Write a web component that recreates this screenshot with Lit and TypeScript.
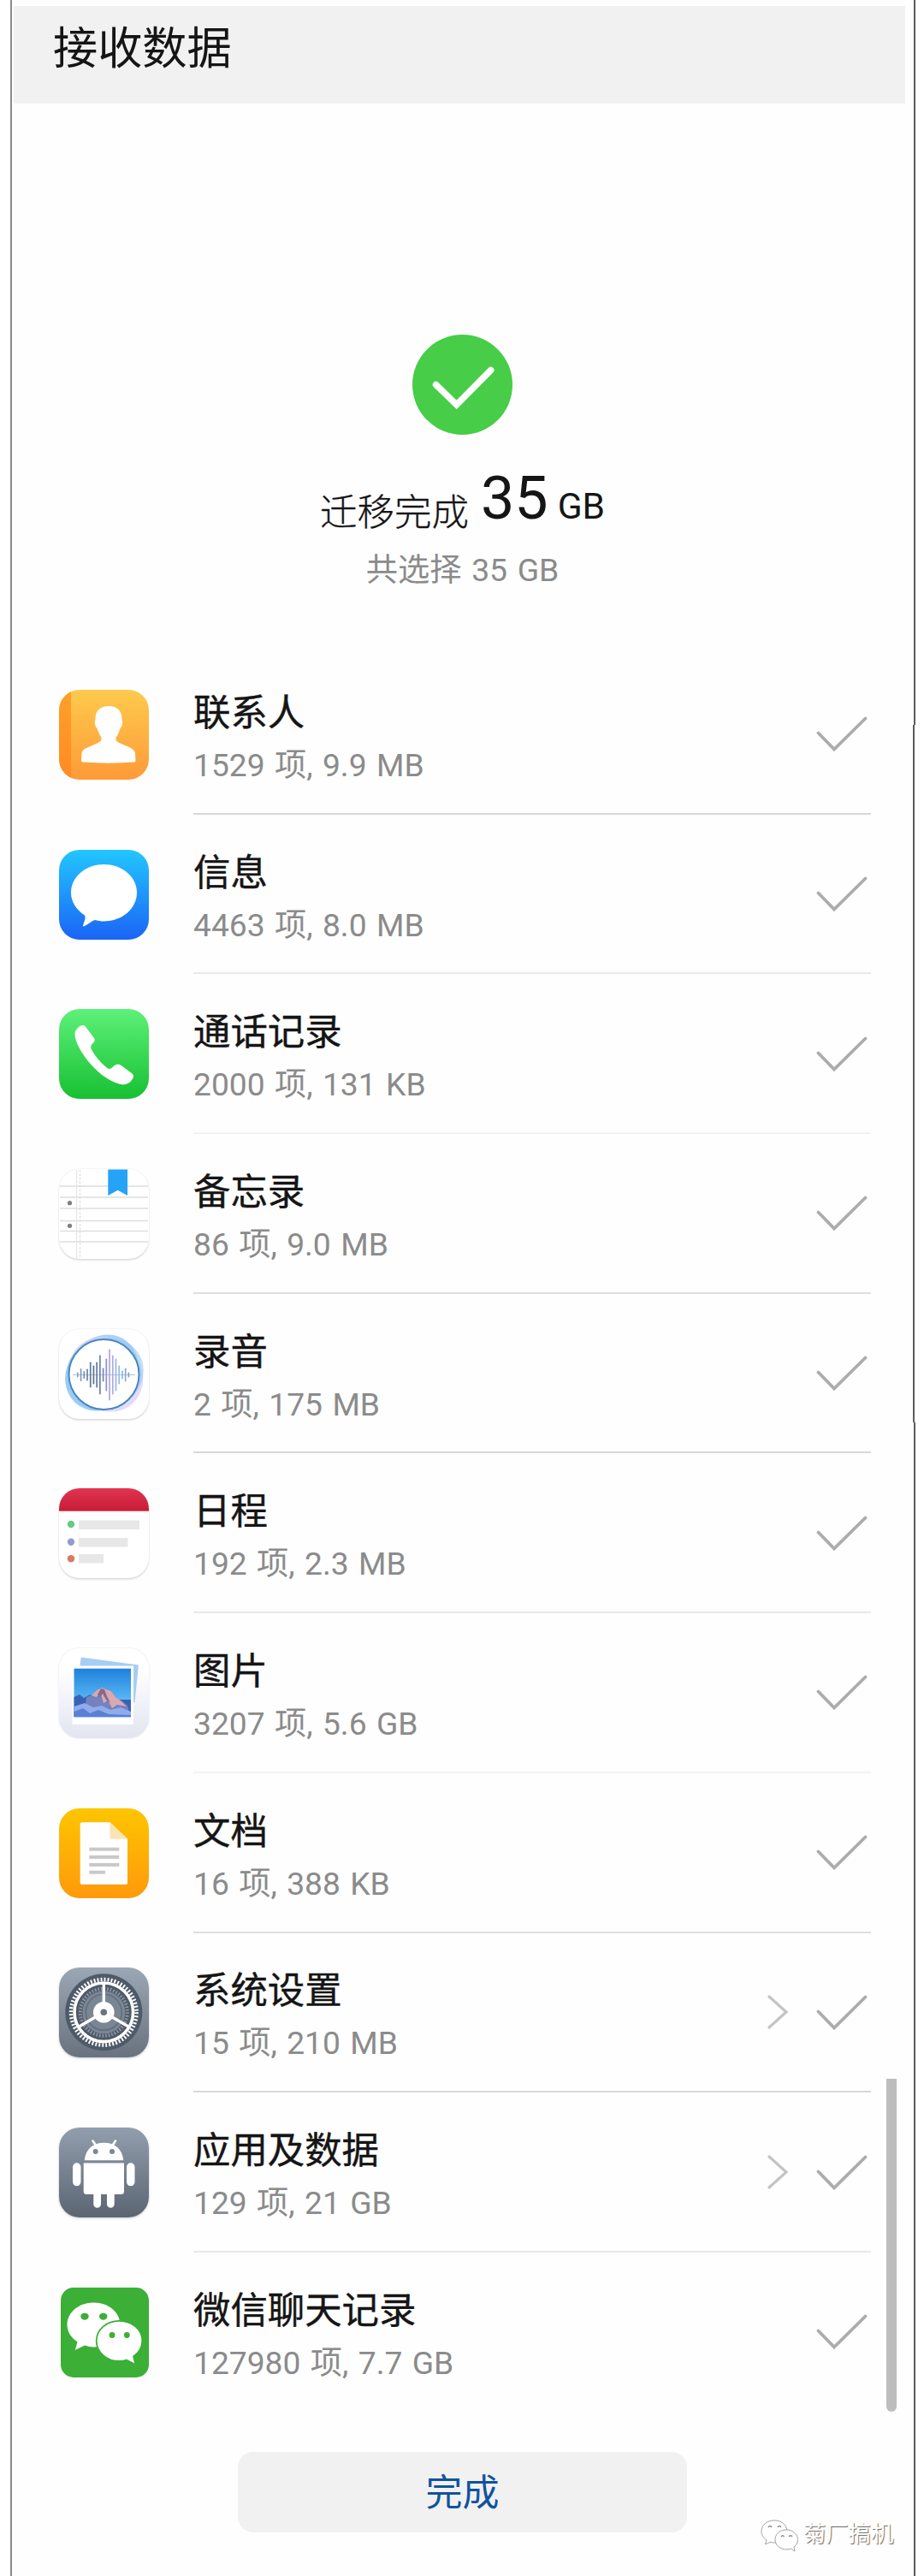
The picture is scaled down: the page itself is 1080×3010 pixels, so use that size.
import { LitElement, html, svg, css } from "lit";
import type { SVGTemplateResult } from "lit";
import { customElement, property } from "lit/decorators.js";

interface TransferItem {
  icon: string;
  title: string;
  detail: string;
  more?: boolean;
}

const ITEMS: TransferItem[] = [
  { icon: "contacts", title: "联系人", detail: "1529 项, 9.9 MB" },
  { icon: "messages", title: "信息", detail: "4463 项, 8.0 MB" },
  { icon: "calls", title: "通话记录", detail: "2000 项, 131 KB" },
  { icon: "notes", title: "备忘录", detail: "86 项, 9.0 MB" },
  { icon: "recorder", title: "录音", detail: "2 项, 175 MB" },
  { icon: "calendar", title: "日程", detail: "192 项, 2.3 MB" },
  { icon: "photos", title: "图片", detail: "3207 项, 5.6 GB" },
  { icon: "docs", title: "文档", detail: "16 项, 388 KB" },
  { icon: "settings", title: "系统设置", detail: "15 项, 210 MB", more: true },
  { icon: "apps", title: "应用及数据", detail: "129 项, 21 GB", more: true },
  { icon: "wechat", title: "微信聊天记录", detail: "127980 项, 7.7 GB" },
];

// Half heights of the recorder waveform bars, left to right
const WAVE = [3, 7.5, 4.5, 7, 15, 11, 15, 23, 8, 19, 30, 23, 19, 11, 5, 8, 3];

const GLYPHS: Record<string, SVGTemplateResult> = {
  contacts: svg`
    <rect width="14" height="105" fill="#ff7d10" opacity="0.55" />
    <path
      fill="#fff"
      d="M58 19C48 19 42 25 42.5 35C41 37 42 43 44.500 45C46 50 48 53 49.500 56C50 61 46 61.500 41 64C34 67.500 27.500 68.500 26.500 74L26 82C26 84 27 84.500 29 84.500C48 86 68 86 87 84.500C89 84.500 89.500 84 89.500 82L89 74C88 68.500 81 67 75 64C70 61.500 66 61 66.500 56C68.500 53 70 50 71.500 45C74 43 75 37 73.500 35C74 25 68 19 58 19Z"
    />
  `,
  messages: svg`
    <path
      fill="#fff"
      d="M52.400 17C31 17 14 31.500 14 50C14 60.500 20 70 30 76.500C31.500 80 29.500 84 28 88C27.700 89.500 29 89.500 30 89C35 86.500 38 83 42 82C45 82.800 49 83.500 52.400 83.500C74 83.500 91 68.500 91 50C91 31.500 74 17 52.400 17Z"
    />
  `,
  calls: svg`
    <path
      fill="#fff"
      d="M18.500 29C18.500 24 24 19 28 19C30 19 31 20.500 32 22L41 34C42.500 36 41.500 38 40 39.500C37 42 36.500 44.500 38 47.500C43 56.500 50 64 57 69.500C59 70.500 61 69.500 63 67.500C66 64.500 69 63.500 72 65.500L85 75C87.500 77 87.500 79 86 81.500C83 87 78 89 72 88C61 85.500 48 77 37.500 65C27 53 18.500 39 18.500 29Z"
    />
  `,
  notes: svg`
    <g stroke="#dedede" stroke-width="1.300">
      ${[20, 33, 46, 60.5, 72.5, 85].map((y) => svg`<path d="M1 ${y}H104" />`)}
    </g>
    <path d="M20.500 1V104" stroke="#e6e6e6" stroke-width="1.300" />
    <path d="M24.500 1V104" stroke="#dcdcdc" stroke-width="1.300" stroke-dasharray="2.500 2" />
    <circle cx="12.500" cy="39.700" r="2.600" fill="#808080" />
    <circle cx="12.500" cy="66.300" r="2.600" fill="#808080" />
    <path d="M57.300 0.500H80V31L68.700 24.700L57.300 31Z" fill="#25a3f6" />
  `,
  recorder: svg`
    <defs>
      <linearGradient id="wave" gradientUnits="userSpaceOnUse" x1="20" y1="0" x2="85" y2="0">
        <stop offset="0" stop-color="#8fa9c4" />
        <stop offset="0.300" stop-color="#56708f" />
        <stop offset="0.520" stop-color="#7d88c9" />
        <stop offset="0.600" stop-color="#b5a2e6" />
        <stop offset="0.800" stop-color="#8cc0e2" />
        <stop offset="1" stop-color="#7f93b4" />
      </linearGradient>
    </defs>
    <ellipse cx="50" cy="51" rx="47" ry="40" fill="#8fc4f2" opacity="0.750" transform="rotate(-52 50 51)" />
    <ellipse cx="55" cy="53" rx="46" ry="41" fill="#d9cdf7" opacity="0.700" transform="rotate(48 55 53)" />
    <ellipse cx="53" cy="53" rx="47" ry="41" fill="#8cc6f3" opacity="0.550" transform="rotate(-28 53 53)" />
    <circle cx="52.500" cy="53" r="41" fill="#fff" stroke="#4588bd" stroke-width="2" />
    <path d="M16 53.500H89" stroke="#9db4cc" stroke-width="0.800" />
    <g fill="url(#wave)">
      ${WAVE.map(
        (h, i) =>
          svg`<rect x=${21 + i * 3.72} y=${53.5 - h} width="1.700" height=${h * 2} rx="0.700" />`,
      )}
    </g>
  `,
  calendar: svg`
    <defs>
      <linearGradient id="red" x1="0" y1="0" x2="0" y2="1">
        <stop offset="0" stop-color="#e03552" />
        <stop offset="1" stop-color="#c71c32" />
      </linearGradient>
    </defs>
    <rect width="105" height="26.700" fill="url(#red)" />
    <circle cx="14" cy="42" r="4.200" fill="#63cb84" />
    <circle cx="14" cy="62.700" r="4.200" fill="#939bd3" />
    <circle cx="14" cy="82.300" r="4.200" fill="#d67b62" />
    <g fill="#e7e7e7">
      <rect x="23" y="37.500" width="71" height="10.500" />
      <rect x="23" y="58" width="57.500" height="10.500" />
      <rect x="23" y="77" width="29" height="10.500" />
    </g>
  `,
  photos: svg`
    <defs>
      <linearGradient id="sky" x1="0" y1="0" x2="0" y2="1">
        <stop offset="0" stop-color="#1f80dc" />
        <stop offset="0.700" stop-color="#5dbcf6" />
      </linearGradient>
    </defs>
    <path d="M25.700 10.500L93 19.500L88.500 63L20 55Z" fill="#a5cef3" />
    <rect x="15.500" y="20.500" width="71.500" height="68.500" fill="#fff" />
    <rect x="17.500" y="23.700" width="66.500" height="56.500" fill="url(#sky)" />
    <path d="M17.500 57L24 54L29 58L36 54L50 60H84V80H17.500Z" fill="#3a62b4" />
    <path d="M32 57L40 54L45 48L50 46L55 48L61 50L67 58L74 62L80 67L82 74H30Z" fill="#7482bd" />
    <path d="M44 49L50 46L55 48L61 50L66 57L73 62L79 68L68 66L62 70L57 61L52 64L49 54L43 57L38 55Z" fill="#d9a8b2" />
    <path d="M49 47L53 48L56 56L60 64L55 60L51 53L47 58L45 54Z" fill="#85698f" />
    <path d="M17.500 68L30 64L40 69L50 67L60 72L72 69L84 74V80.200H17.500Z" fill="#8facec" />
    <path d="M17.500 74L28 70L36 76L46 72L58 77L84 78V80.200H17.500Z" fill="#5b80d3" />
  `,
  docs: svg`
    <path
      fill="#fff"
      d="M27 16.300H59.500L80 35.700V86.500Q80 89 77.500 89H27.200Q24.700 89 24.700 86.500V18.800Q24.700 16.300 27 16.300Z"
    />
    <path d="M59.500 16.300L80 35.700H61.500Q59.500 35.700 59.500 33.700Z" fill="#fbe3b4" />
    <g stroke="#c9c9c9" stroke-width="4">
      <path d="M35.300 47.700H70.300" />
      <path d="M35.300 56.900H70.300" />
      <path d="M35.300 66H70.300" />
      <path d="M35.300 74.800H54" />
    </g>
  `,
  settings: svg`
    <circle cx="52.300" cy="52.300" r="45" fill="#4f5a69" />
    <circle cx="52.300" cy="52.300" r="25" fill="#7b8695" />
    <circle cx="52.300" cy="52.300" r="27.500" fill="none" stroke="#8b95a3" stroke-width="4" stroke-dasharray="1.700 1.900" />
    <circle cx="52.300" cy="52.300" r="21" fill="none" stroke="#626d7c" stroke-width="1.500" />
    <g fill="none" stroke="#fff">
      <circle cx="52.300" cy="52.300" r="38.300" stroke-width="4.500" stroke-dasharray="1.900 2.111" />
      <circle cx="52.300" cy="52.300" r="34.300" stroke-width="3.600" />
      <path d="M52.300 52.300V18M52.300 52.300L22.600 69.500M52.300 52.300L82 69.500" stroke-width="3.400" />
    </g>
    <circle cx="52.300" cy="52.300" r="12.300" fill="#fff" />
    <circle cx="52.300" cy="52.300" r="3.800" fill="#697483" />
  `,
  apps: svg`
    <g stroke="#fff" stroke-width="2.600" stroke-linecap="round">
      <path d="M39.500 15.500L44 22.500M66 15.500L61.500 22.500" />
    </g>
    <g fill="#fff">
      <path d="M29.700 38.300C31 25 40 17.700 52.500 17.700C65 17.700 74 25 75.300 38.300Z" />
      <path d="M28.700 41.500H76V74.500Q76 78 72.500 78H64.700V89.500A4.350 4.350 0 0 1 56 89.500V78H49V89.500A4.350 4.350 0 0 1 40.300 89.500V78H32.200Q28.700 78 28.700 74.500Z" />
      <rect x="16" y="41.300" width="9.500" height="27" rx="4.700" />
      <rect x="79" y="41.300" width="9.500" height="27" rx="4.700" />
    </g>
    <circle cx="42.700" cy="28" r="3" fill="#7c8796" />
    <circle cx="62" cy="28" r="3" fill="#7c8796" />
  `,
  wechat: svg`
    <path
      fill="#fff"
      d="M40.500 17.500C23 17.500 9.500 29 9.500 43.500C9.500 51.500 14 58.500 21.500 63.500L18.800 73L30 67.500C33.500 68.700 37 69.500 40.500 69.500C58 69.500 71.500 58 71.500 43.500C71.500 29 58 17.500 40.500 17.500Z"
    />
    <path
      fill="#fff"
      stroke="#3caf36"
      stroke-width="1.800"
      d="M70.500 38.800C55.500 38.800 43.700 49 43.700 62.300C43.700 75.500 55.500 86 70.500 86C73.500 86 76.500 85.500 79 84.700L89.500 90L87 80.500C93.500 76 97.300 70 97.300 62.300C97.300 49 85.500 38.800 70.500 38.800Z"
    />
    <g fill="#3caf36">
      <ellipse cx="30" cy="33.700" rx="4.700" ry="4" />
      <ellipse cx="51.700" cy="33.700" rx="4.700" ry="4" />
      <circle cx="62" cy="55.500" r="3.400" />
      <circle cx="79.300" cy="55.500" r="3.400" />
    </g>
  `,
};

/**
 * Rounded launcher tile holding one of the glyphs above.
 */
@customElement("app-tile")
export class AppTile extends LitElement {
  @property({ type: String }) name = "";

  static styles = css`
    :host {
      display: block;
      width: 105px;
      height: 105px;
    }
    .tile {
      width: 105px;
      height: 105px;
      border-radius: 24px;
      overflow: hidden;
    }
    .tile svg {
      display: block;
    }
    .contacts {
      background: linear-gradient(#fdca4c, #ff9a38);
    }
    .messages {
      background: linear-gradient(#23c6ff, #1b64f5);
    }
    .calls {
      background: linear-gradient(#5df179, #17c032);
    }
    .notes,
    .recorder,
    .calendar {
      background: #fff;
      box-shadow:
        0 0 2px rgba(0, 0, 0, 0.12),
        0 2px 2px rgba(0, 0, 0, 0.1);
    }
    .photos {
      background: linear-gradient(#fff 25%, #e2e4f0);
      box-shadow: 0 0 2px rgba(0, 0, 0, 0.16);
    }
    .docs {
      background: linear-gradient(#fdc500, #ff990c);
    }
    .settings {
      background: linear-gradient(#9ba7b5, #69727f);
      box-shadow: 0 1px 3px rgba(0, 0, 0, 0.2);
    }
    .apps {
      background: linear-gradient(#929eae, #5b6572);
      box-shadow: 0 1px 3px rgba(0, 0, 0, 0.2);
    }
    .wechat {
      width: 103px;
      margin-left: 2px;
      border-radius: 15px;
      background: #3caf36;
    }
    .wechat svg {
      margin-left: -2px;
    }
  `;

  render() {
    return html`
      <div class="tile ${this.name}">
        <svg width="105" height="105" viewBox="0 0 105 105" fill="none">
          ${GLYPHS[this.name]}
        </svg>
      </div>
    `;
  }
}

@customElement("app-root")
export class AppRoot extends LitElement {
  static styles = css`
    :host {
      display: block;
      font-family: Roboto, "Noto Sans CJK SC", sans-serif;
      color: #151515;
    }
    .page {
      position: relative;
      display: flex;
      width: 1080px;
      height: 3010px;
      background: #fff;
      overflow: hidden;
    }
    .edge-left {
      flex: none;
      width: 2px;
      margin-left: 12px;
      background: #8b8b8b;
    }
    .screen {
      flex: 1;
      display: flex;
      flex-direction: column;
      min-width: 0;
      background: #fefefe;
    }
    .edge-right {
      flex: none;
      display: flex;
      flex-direction: column;
      width: 13px;
    }
    .edge-right span {
      width: 2px;
      height: 847px;
      margin-left: 1px;
      background: #5c5c5c;
    }
    .edge-right .shifted {
      height: 815px;
      margin-left: 0;
    }
    .edge-right .rest {
      flex: 1;
      height: auto;
    }
    .header {
      box-sizing: border-box;
      height: 114px;
      margin: 7px 9px 0 2px;
      padding: 13px 0 0 46px;
      background: #f1f1f1;
      font-size: 52.2px;
      line-height: 76px;
    }
    .summary {
      display: flex;
      flex-direction: column;
      align-items: center;
      height: 644px;
      box-sizing: border-box;
      padding-top: 270px;
    }
    .summary svg {
      display: block;
    }
    .total {
      display: flex;
      align-items: baseline;
      margin-top: 25px;
      height: 98px;
      line-height: 98px;
      font-size: 42.5px;
      white-space: pre;
    }
    .total .label {
      position: relative;
      top: 8px;
      font-size: 43.5px;
      font-weight: 300;
      -webkit-text-stroke: 0.3px #151515;
    }
    .total .amount {
      margin-left: 14px;
      font-size: 70px;
    }
    .total .unit {
      margin-left: 11px;
    }
    .selected {
      margin-top: 10px;
      font-size: 37.3px;
      line-height: 50px;
      word-spacing: 2.3px;
      color: #8b8b8b;
    }
    .row {
      display: flex;
      align-items: center;
      height: 186.7px;
      padding-left: 55px;
    }
    .body {
      box-sizing: border-box;
      flex: none;
      display: flex;
      align-items: center;
      width: 792px;
      height: 100%;
      margin-left: 52px;
      border-bottom: 2px solid #d8d8d8;
    }
    .row:nth-child(4n + 2) .body {
      border-color: #e9e9e9;
    }
    .row:nth-child(4n + 3) .body {
      border-color: #f2f2f2;
    }
    .row:nth-child(4n) .body {
      border-color: #dedede;
    }
    .row:last-child .body {
      border-color: transparent;
    }
    .text {
      flex: 1;
      display: flex;
      flex-direction: column;
      padding-top: 11px;
    }
    .title {
      font-size: 43.4px;
      line-height: 62px;
      -webkit-text-stroke: 0.4px #151515;
    }
    .detail {
      font-size: 37.2px;
      line-height: 58px;
      word-spacing: 2.2px;
      color: #8b8b8b;
    }
    .chevron {
      margin-right: 30px;
    }
    .check {
      margin-right: 4px;
    }
    .done {
      align-self: center;
      box-sizing: border-box;
      width: 525px;
      height: 94px;
      margin: 46px 0 0;
      padding: 3px 0 0;
      border: 0;
      border-radius: 18px;
      background: #f1f1f1;
      color: #11539c;
      font: inherit;
      font-size: 43px;
      line-height: 91px;
    }
    .scrollbar {
      position: absolute;
      left: 1036px;
      top: 2429px;
      width: 12px;
      height: 389px;
      border-radius: 0 0 6px 6px;
      background: #bdbdbd;
    }
    .watermark {
      position: absolute;
      left: 888px;
      top: 2939px;
      display: flex;
      align-items: center;
      gap: 5px;
      color: #fff;
      font-size: 26.3px;
      line-height: 44px;
      text-shadow: 1px 1px 1px #666;
    }
  `;

  private renderRow(item: TransferItem) {
    return html`
      <div class="row">
        <app-tile name=${item.icon}></app-tile>
        <div class="body">
          <div class="text">
            <div class="title">${item.title}</div>
            <div class="detail">${item.detail}</div>
          </div>
          ${item.more
            ? html`<svg class="chevron" width="26" height="42" viewBox="0 0 26 42" fill="none">
                <path d="M3 3L23 21L3 39" stroke="#c4c4c4" stroke-width="3.200" stroke-linecap="round" />
              </svg>`
            : ""}
          <svg class="check" width="62" height="42" viewBox="0 0 62 42" fill="none">
            <path d="M4.500 20.500L23 39.500L59.500 3.500" stroke="#acacac" stroke-width="3.800" stroke-linecap="round" />
          </svg>
        </div>
      </div>
    `;
  }

  render() {
    return html`
      <div class="page">
        <div class="edge-left"></div>
        <div class="screen">
          <div class="header">接收数据</div>
          <div class="summary">
            <svg width="117" height="117" viewBox="0 0 117 117" fill="none">
              <circle cx="58.500" cy="58.500" r="58.500" fill="#47cd48" />
              <path d="M27.500 58.500L51.700 82L91.700 41.500" stroke="#fff" stroke-width="7.500" stroke-linecap="round" />
            </svg>
            <div class="total">
              <span class="label">迁移完成</span><span class="amount">35</span><span class="unit">GB</span>
            </div>
            <div class="selected">共选择 35 GB</div>
          </div>
          <div class="list">${ITEMS.map((item) => this.renderRow(item))}</div>
          <button class="done">完成</button>
        </div>
        <div class="edge-right">
          <span></span>
          <span class="shifted"></span>
          <span class="rest"></span>
        </div>
        <div class="scrollbar"></div>
        <div class="watermark">
          <svg width="46" height="42" viewBox="0 0 46 42" fill="#fff" stroke="#999" stroke-width="0.900">
            <path d="M17 5C8 5 2 11 2 18C2 22 4 25 8 28L6.500 33L12 30.500C22 33 32 27 32 18C32 11 26 5 17 5Z" />
            <path d="M31 16C23 16 18 21.500 18 27.500C18 34 24 39 31 39C33 39 35 38.700 36.500 38L41 41L40 36C43 34 44.500 31 44.500 27.500C44.500 21.500 39 16 31 16Z" />
            <path d="M10 13Q12 10.500 14 13M21 13Q23 10.500 25 13M25 24Q26.500 21.500 28.500 24M34 24Q36 21.500 38 24" stroke="#666" stroke-width="1.200" />
          </svg>
          <span>菊厂搞机</span>
        </div>
      </div>
    `;
  }
}
